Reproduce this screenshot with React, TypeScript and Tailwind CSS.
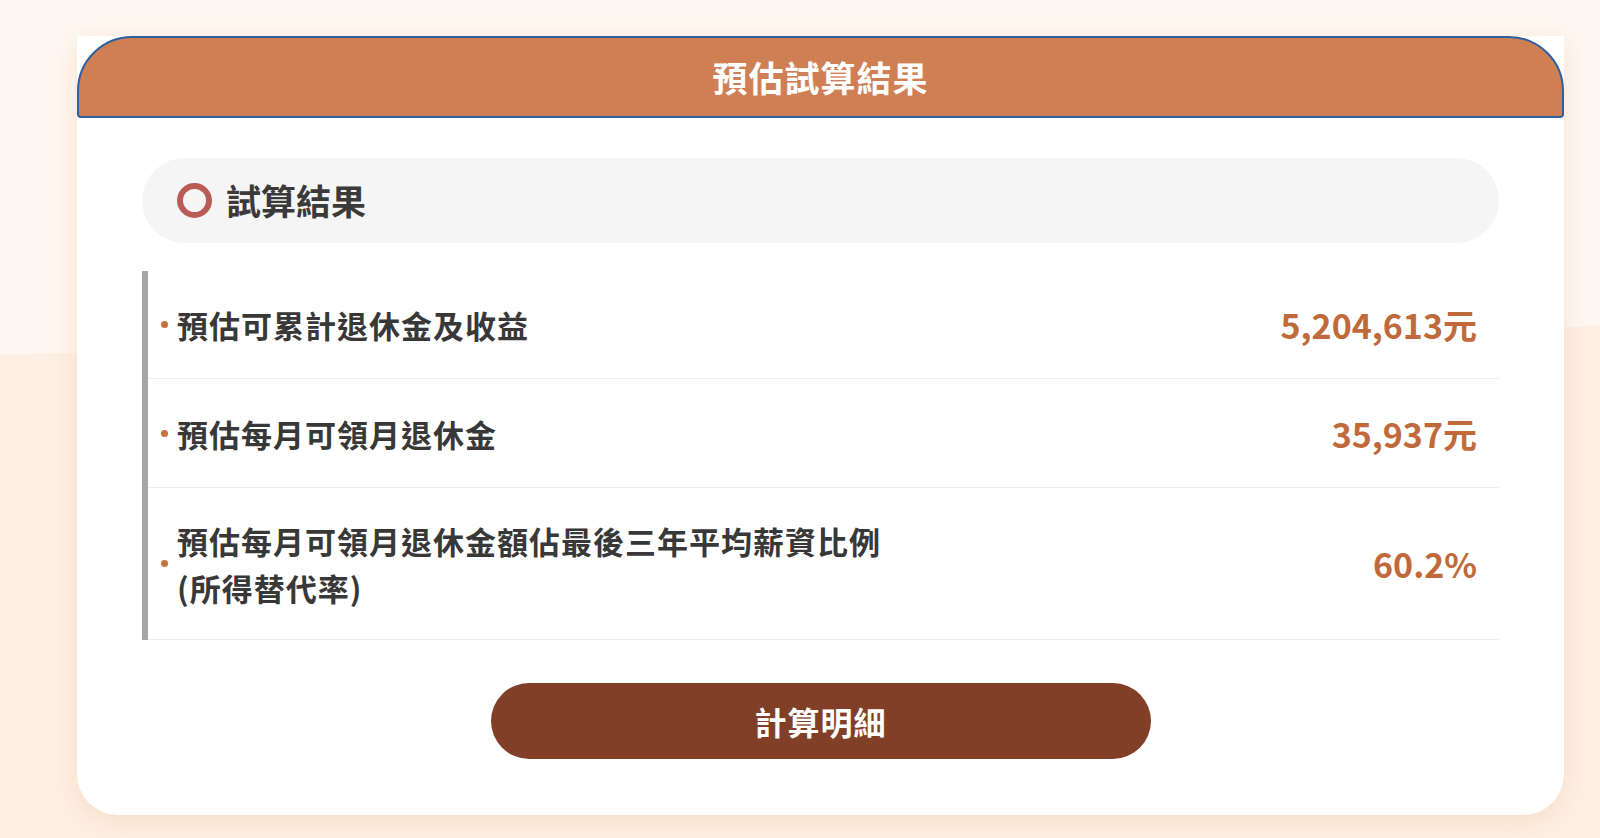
import React from "react";

const rows = [
  { label: ["預估可累計退休金及收益"], value: "5,204,613元", h: "h-[108px]" },
  { label: ["預估每月可領月退休金"], value: "35,937元", h: "h-[109px]" },
  {
    label: ["預估每月可領月退休金額佔最後三年平均薪資比例", "(所得替代率)"],
    value: "60.2%",
    h: "h-[152px]",
  },
];

const ResultRow = ({ label, value, h }: { label: string[]; value: string; h: string }) => (
  <div className={`flex items-center justify-between border-b border-[#ececec] pl-[13px] pr-[22px] ${h}`}>
    <div className="flex items-center">
      <span className="mr-[9px] h-[7px] w-[7px] shrink-0 rounded-full bg-[#c8703f]" />
      <div className="text-[31px] font-bold leading-[47px] tracking-[1px] text-[#383838]">
        {label.map((l) => (
          <div key={l}>{l}</div>
        ))}
      </div>
    </div>
    <div className="text-[34px] font-bold text-[#c0693a]">{value}</div>
  </div>
);

export default function App() {
  return (
    <div
      className="min-h-screen w-full overflow-hidden bg-[linear-gradient(179deg,#fef7f1_0,#fef7f1_354px,#fdefe3_354px)] pt-[36px]"
      style={{ fontFamily: '"Noto Sans CJK TC", "Noto Sans", sans-serif' }}
    >
      <div className="ml-[77px] w-[1487px] rounded-b-[41px] bg-white shadow-[0_6px_24px_rgba(236,190,150,0.35)]">
        {/* header */}
        <div className="flex h-[82px] items-center justify-center rounded-t-[55px] rounded-b-[4px] border-2 border-[#2d5fa3] bg-[#cf7f54]">
          <h1 className="text-[35px] font-bold tracking-[1px] text-white">預估試算結果</h1>
        </div>

        <div className="px-[65px] pb-[56px] pt-[40px]">
          {/* section title */}
          <div className="flex h-[85px] items-center rounded-full bg-[#f5f5f5] pl-[35px]">
            <span className="mr-[14px] h-[35px] w-[35px] rounded-full border-[6px] border-[#b85c55]" />
            <span className="text-[35px] font-bold text-[#3a3a3a]">試算結果</span>
          </div>

          {/* results list */}
          <div className="mt-[28px] border-l-[6px] border-[#a6a6a6]">
            {rows.map((r) => (
              <ResultRow key={r.value} {...r} />
            ))}
          </div>

          <div className="mt-[43px] flex justify-center">
            <button className="h-[76px] w-[660px] rounded-full bg-[#823f27] text-[32px] font-bold tracking-[1px] text-white">
              計算明細
            </button>
          </div>
        </div>
      </div>
    </div>
  );
}
